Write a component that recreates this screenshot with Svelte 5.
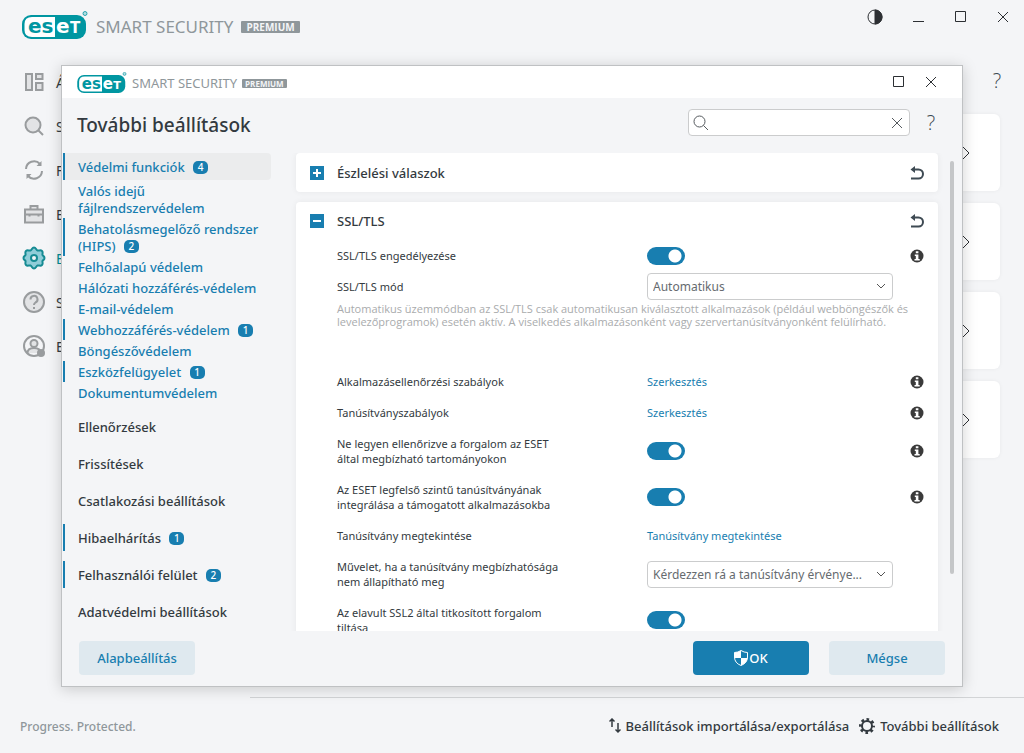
<script>
    let navItems = [
        { letter: 'Á', icon: 'overview' },
        { letter: 'S', icon: 'scan' },
        { letter: 'F', icon: 'update' },
        { letter: 'E', icon: 'tools' },
        { letter: 'B', icon: 'setup', active: true },
        { letter: 'S', icon: 'help' },
        { letter: 'E', icon: 'account' }
    ]

    let protections = [
        { label: 'Valós idejű fájlrendszervédelem' },
        { label: 'Behatolásmegelőző rendszer (HIPS)', count: 2 },
        { label: 'Felhőalapú védelem' },
        { label: 'Hálózati hozzáférés-védelem' },
        { label: 'E-mail-védelem' },
        { label: 'Webhozzáférés-védelem', count: 1 },
        { label: 'Böngészővédelem' },
        { label: 'Eszközfelügyelet', count: 1 },
        { label: 'Dokumentumvédelem' }
    ]

    let sections = [
        { label: 'Ellenőrzések' },
        { label: 'Frissítések' },
        { label: 'Csatlakozási beállítások' },
        { label: 'Hibaelhárítás', count: 1 },
        { label: 'Felhasználói felület', count: 2 },
        { label: 'Adatvédelmi beállítások' }
    ]

    let settings = $state([
        { id: 'enable', label: 'SSL/TLS engedélyezése', type: 'toggle', on: true, info: true },
        {
            id: 'mode', label: 'SSL/TLS mód', type: 'select', value: 'Automatikus',
            note: 'Automatikus üzemmódban az SSL/TLS csak automatikusan kiválasztott alkalmazások (például webböngészők és levelezőprogramok) esetén aktív. A viselkedés alkalmazásonként vagy szervertanúsítványonként felülírható.'
        },
        { id: 'app-rules', label: 'Alkalmazásellenőrzési szabályok', type: 'link', value: 'Szerkesztés', info: true },
        { id: 'cert-rules', label: 'Tanúsítványszabályok', type: 'link', value: 'Szerkesztés', info: true },
        { id: 'trusted', label: 'Ne legyen ellenőrizve a forgalom az ESET által megbízható tartományokon', type: 'toggle', on: true, info: true },
        { id: 'root', label: 'Az ESET legfelső szintű tanúsítványának integrálása a támogatott alkalmazásokba', type: 'toggle', on: true, info: true },
        { id: 'view', label: 'Tanúsítvány megtekintése', type: 'link', value: 'Tanúsítvány megtekintése' },
        { id: 'action', label: 'Művelet, ha a tanúsítvány megbízhatósága nem állapítható meg', type: 'select', value: 'Kérdezzen rá a tanúsítvány érvénye...' },
        { id: 'ssl2', label: 'Az elavult SSL2 által titkosított forgalom tiltása', type: 'toggle', on: true }
    ])

    let search = $state('')
</script>

{#snippet brand(small)}
    <div class="brand" class:small>
        <svg class="pill" viewBox="0 0 66 28">
            <rect x="0" y="4" width="64" height="24" rx="9" fill="#0096a1" />
            <path d="M10 6h23v20H10q-7.500 0-7.500-7v-6q0-7 7.500-7z" fill="#fff" />
            <text x="6" y="22" font-size="20" fill="#0096a1">es</text>
            <text x="34" y="22" font-size="20" fill="#fff">e</text>
            <text x="48" y="22" font-size="15" fill="#fff">T</text>
            <circle cx="63" cy="2.500" r="2" fill="#b5dde1" stroke="#0096a1" stroke-width=".8" />
        </svg>
        <span class="product">SMART SECURITY</span>
        <span class="edition">PREMIUM</span>
    </div>
{/snippet}

{#snippet count(n)}
    {#if n}<span class="count">{n}</span>{/if}
{/snippet}

{#snippet cross()}
    <svg width="12" height="12" viewBox="0 0 12 12"><path d="M1 1l10 10M11 1L1 11" /></svg>
{/snippet}

{#snippet undo()}
    <button class="undo" aria-label="↶">
        <svg width="14" height="16" viewBox="0 0 14 16">
            <path d="M3 4.500h5.500a4.500 4.500 0 0 1 0 9H1" fill="none" stroke="#3e4a53" stroke-width="2" />
            <path d="M0.500 4.500L5 1v7z" fill="#3e4a53" />
        </svg>
    </button>
{/snippet}

<div class="app">
    <header class="top">
        {@render brand(false)}
        <div class="window-buttons">
            <button aria-label="◐">
                <svg width="16" height="16" viewBox="0 0 16 16"><circle cx="8" cy="8" r="7" /><path d="M8 1a7 7 0 0 1 0 14z" fill="#2c2f33" /></svg>
            </button>
            <button aria-label="_"><svg width="12" height="12" viewBox="0 0 12 12"><path d="M0 10.500h11" /></svg></button>
            <button aria-label="□"><svg width="12" height="12" viewBox="0 0 12 12"><path d="M.500.500h10v10H.500z" /></svg></button>
            <button aria-label="×">{@render cross()}</button>
        </div>
    </header>

    <div class="middle">
        <nav class="rail">
            {#each navItems as item}
                <a href="#top" class:active={item.active}>
                    <svg width="24" height="24" viewBox="0 0 24 24">
                        {#if item.icon === 'overview'}
                            <path d="M4 4h6v16H4zM14 4h6.500v5H14zM14 13h6.500v7H14z" />
                        {:else if item.icon === 'scan'}
                            <circle cx="11" cy="11" r="7.500" /><path d="M16.500 16.500l4.500 4.500" />
                        {:else if item.icon === 'update'}
                            <path fill="none" d="M4 11a8 8 0 0 1 14-5M20 13a8 8 0 0 1-14 5" />
                            <path d="M19.500 3v5h-5zM4.500 21v-5h5z" class="solid" />
                        {:else if item.icon === 'tools'}
                            <path d="M3 7.500h18v13H3zM8.500 7V4h7v3" /><path fill="none" d="M3 12.500h18M7.500 12v2.500M16.500 12v2.500" />
                        {:else if item.icon === 'setup'}
                            <path d="M12 1.500c2 0 2 2.500 3.500 3s3-1 4.500.500 0 3 .500 4 2 1 2 3-1.500 2-2 3 1 2.500-.500 4-3 0-4.500.500-1.500 3-3.500 3-2-2.500-3.500-3-3 1-4.500-.500 0-3-.500-4-2-1-2-3 1.500-2 2-3-1-2.500.500-4 3 0 4.500-.500 1.500-3 3.500-3z" />
                            <circle cx="12" cy="12" r="3" fill="#f4f5f7" />
                        {:else if item.icon === 'help'}
                            <circle cx="12" cy="12" r="10" /><path fill="none" d="M8.500 9.500a3.500 3.500 0 1 1 5 3q-1.500 1-1.500 2.500M12 17v2" />
                        {:else}
                            <circle cx="12" cy="12" r="10" fill="#f4f5f7" /><path d="M5.500 19q0-5 6.500-5t6.500 5" />
                            <circle cx="12" cy="9.500" r="3.500" /><circle cx="19" cy="19" r="4" class="solid" />
                        {/if}
                    </svg>
                    <span>{item.letter}</span>
                </a>
            {/each}
        </nav>
        <main class="tiles">
            <button class="ask">?</button>
            {#each [1, 2, 3, 4] as tile (tile)}
                <button class="tile" aria-label=">">
                    <svg width="10" height="16" viewBox="0 0 10 16"><path d="M2 1l7 7-7 7" /></svg>
                </button>
            {/each}
        </main>
    </div>

    <footer class="bottom">
        <span class="motto">Progress. Protected.</span>
        <div class="bottom-links">
            <a href="#import">
                <svg width="12" height="16" viewBox="0 0 12 16">
                    <path d="M3 9V1M.500 3.500L3 1l2.500 2.500M9 5v9M6.500 11.500L9 14l2.500-2.500" fill="none" stroke="#333a40" stroke-width="1.500" />
                </svg>
                Beállítások importálása/exportálása
            </a>
            <a href="#advanced">
                <svg width="16" height="16" viewBox="0 0 16 16" fill="none" stroke="#333a40">
                    <circle cx="8" cy="8" r="5" stroke-width="2" />
                    <circle cx="8" cy="8" r="6.500" stroke-width="3" stroke-dasharray="2.553 2.553" stroke-dashoffset="1.276" />
                </svg>
                További beállítások
            </a>
        </div>
    </footer>

    <section class="dialog">
        <div class="titlebar">
            {@render brand(true)}
            <div class="window-buttons">
                <button aria-label="□"><svg width="12" height="12" viewBox="0 0 12 12"><path d="M.500.500h10v10H.500z" /></svg></button>
                <button aria-label="×">{@render cross()}</button>
            </div>
        </div>

        <div class="heading">
            <h1>További beállítások</h1>
            <label class="search">
                <svg width="16" height="16" viewBox="0 0 16 16"><circle cx="6.500" cy="6.500" r="5.500" /><path d="M10.500 10.500l4.500 4.500" /></svg>
                <input type="text" bind:value={search} />
                <button aria-label="×" onclick={() => (search = '')}>{@render cross()}</button>
            </label>
            <button class="ask">?</button>
        </div>

        <div class="body">
            <nav class="menu">
                <a class="section selected marked" href="#protections">Védelmi funkciók {@render count(4)}</a>
                {#each protections as item}
                    <a class="sub" class:marked={item.count} href="#protections">{item.label} {@render count(item.count)}</a>
                {/each}
                {#each sections as item}
                    <a class="section" class:marked={item.count} href="#section">{item.label} {@render count(item.count)}</a>
                {/each}
            </nav>

            <div class="panels">
                <div class="card">
                    <div class="card-head">
                        <button class="fold" aria-label="+"><svg width="14" height="14" viewBox="0 0 14 14"><path d="M3 7h8M7 3v8" /></svg></button>
                        <h2>Észlelési válaszok</h2>
                        {@render undo()}
                    </div>
                </div>
                <div class="card">
                    <div class="card-head open">
                        <button class="fold" aria-label="-"><svg width="14" height="14" viewBox="0 0 14 14"><path d="M3 7h8" /></svg></button>
                        <h2>SSL/TLS</h2>
                        {@render undo()}
                    </div>
                    {#each settings as row (row.id)}
                        <div class="row">
                            <label for={row.id}>{row.label}</label>
                            {#if row.type === 'toggle'}
                                <input id={row.id} class="toggle" type="checkbox" bind:checked={row.on} />
                            {:else if row.type === 'select'}
                                <div class="select">
                                    <select id={row.id}><option>{row.value}</option></select>
                                    <svg width="10" height="6" viewBox="0 0 10 6"><path d="M1 1l4 4 4-4" /></svg>
                                </div>
                            {:else}
                                <a id={row.id} href="#edit">{row.value}</a>
                            {/if}
                            {#if row.info}
                                <button class="info" aria-label="i">
                                    <svg width="14" height="14" viewBox="0 0 14 14">
                                        <circle cx="7" cy="7" r="6.500" fill="#3a3a3a" />
                                        <path d="M5.800 2.300h2.600v2H5.800zM4.800 5.500h3.600v4.500H9.700v1.500H4.500V10h1.300V7h-1z" fill="#fff" />
                                    </svg>
                                </button>
                            {/if}
                        </div>
                        {#if row.note}
                            <p class="note">{row.note}</p>
                        {/if}
                    {/each}
                </div>
            </div>
            <div class="scroll"><div class="thumb"></div></div>
        </div>

        <div class="actions">
            <button class="light">Alapbeállítás</button>
            <button class="primary">
                <svg width="14" height="16" viewBox="0 0 14 16">
                    <path d="M7 .500Q10 2.500 13.500 2.500V7q0 6-6.500 8.500Q.500 13 .500 7V2.500Q4 2.500 7 .500z" fill="#187eb0" stroke="#fff" />
                    <path d="M7 .500V8H.500V2.500Q4 2.500 7 .500zM7 8h6.500q-.500 5-6.500 7.500z" fill="#fff" />
                </svg>OK
            </button>
            <button class="light">Mégse</button>
        </div>
    </section>
</div>

<style>
    :global(body){
        margin: 0;
        background: #f4f5f7;
    }
    .app{
        position: relative;
        display: flex;
        flex-direction: column;
        min-height: 100vh;
        overflow: hidden;
        font-family: "Noto Sans", "Open Sans", sans-serif;
        font-size: 13px;
        color: #333a40;
    }
    button{
        padding: 0;
        border: 0;
        background: none;
        font: inherit;
        color: inherit;
        cursor: pointer;
    }
    a{
        color: inherit;
        text-decoration: none;
    }
    svg{
        display: block;
        flex: none;
    }

    /* logo */
    .brand{
        display: flex;
        align-items: center;
        gap: 8px;
        color: #8f979b;
    }
    .pill{
        width: 66px;
        height: 28px;
        font-family: "DejaVu Sans", sans-serif;
        font-weight: 700;
    }
    .product{
        font-size: 17px;
        line-height: 24px;
        padding-top: 4px;
    }
    .edition{
        margin-top: 4px;
        padding: 0 5px;
        border-radius: 1px;
        background: #8f979b;
        color: #f4f5f7;
        font-family: "Open Sans", sans-serif;
        font-size: 10px;
        font-weight: 700;
        line-height: 12px;
    }
    .small{
        gap: 5px;
    }
    .small .pill{
        width: 50px;
        height: 21px;
    }
    .small .product{
        font-size: 13px;
        line-height: 18px;
        padding-top: 2px;
    }
    .small .edition{
        margin-top: 2px;
        padding: 0 3px;
        font-size: 8px;
        line-height: 9px;
    }

    /* main window */
    .top{
        display: flex;
        justify-content: space-between;
        align-items: flex-start;
        height: 60px;
        padding: 11px 15px 0 22px;
        box-sizing: border-box;
    }
    .window-buttons{
        display: flex;
        align-items: center;
        gap: 30px;
    }
    .top .window-buttons{
        margin-top: -2px;
    }
    .window-buttons svg,
    .search svg,
    .tile svg{
        fill: none;
        stroke: #2c2f33;
    }
    .middle{
        display: flex;
        flex: 1;
    }
    .rail{
        width: 250px;
    }
    .rail a{
        display: flex;
        align-items: center;
        gap: 10px;
        height: 44px;
        padding-left: 22px;
        font-size: 14px;
    }
    .rail svg{
        fill: #e2e3e5;
        stroke: #999c9e;
        stroke-width: 2;
    }
    .rail .solid{
        fill: #999c9e;
        stroke: none;
    }
    .rail .active{
        color: #008b94;
    }
    .rail .active svg{
        fill: #8fcdd8;
        stroke: #168b93;
    }
    .tiles{
        display: flex;
        flex: 1;
        flex-direction: column;
        gap: 12px;
        padding-right: 24px;
    }
    .ask{
        width: 22px;
        color: #3e4a53;
        font-family: "Open Sans", sans-serif;
        font-size: 20px;
        font-weight: 300;
        line-height: 28px;
    }
    .tiles .ask{
        height: 42px;
        align-self: flex-end;
        margin-right: -8px;
    }
    .tile{
        display: flex;
        align-items: center;
        justify-content: flex-end;
        height: 77px;
        padding-right: 30px;
        border-radius: 6px;
        background: #fff;
        box-shadow: 0 0 4px rgba(0,0,0,.05);
    }
    .bottom{
        display: flex;
        align-items: center;
        justify-content: space-between;
        height: 56px;
        padding: 0 25px 0 20px;
        background: linear-gradient(#d2d4d6, #d2d4d6) no-repeat 250px 0 / 100% 1px;
    }
    .motto{
        padding-top: 2px;
        color: #8f979b;
        font-size: 12px;
        font-weight: 500;
    }
    .bottom-links{
        display: flex;
        gap: 10px;
        padding-top: 2px;
        font-weight: 500;
    }
    .bottom-links a{
        display: flex;
        align-items: center;
        gap: 5px;
    }

    /* settings dialog */
    .dialog{
        position: absolute;
        inset: 65px 61px 66px;
        display: flex;
        flex-direction: column;
        border: 1px solid #bfc1c3;
        background: #f4f5f7;
        box-shadow: 0 2px 14px rgba(0,0,0,.18);
    }
    .titlebar{
        display: flex;
        justify-content: space-between;
        height: 32px;
        padding: 0 25px 0 15px;
        background: #fff;
    }
    .titlebar .window-buttons{
        gap: 20px;
    }
    .heading{
        display: flex;
        align-items: flex-start;
        height: 44px;
        padding: 11px 20px 0 15px;
    }
    h1{
        flex: 1;
        margin: 0;
        font-size: 19px;
        font-weight: 500;
        line-height: 32px;
    }
    .search{
        display: flex;
        align-items: center;
        gap: 5px;
        width: 222px;
        height: 27px;
        margin-right: 10px;
        padding: 0 6px 0 4px;
        box-sizing: border-box;
        border: 1px solid #cbcccd;
        border-radius: 4px;
        background: #fff;
    }
    .search svg{
        stroke: #555a5e;
    }
    .search input{
        flex: 1;
        min-width: 0;
        border: 0;
        outline: 0;
        background: none;
        font: inherit;
    }
    .body{
        display: flex;
        flex: 1;
        min-height: 0;
    }
    .menu{
        width: 208px;
        padding-left: 1px;
        font-weight: 500;
    }
    .menu a{
        display: block;
        padding-left: 13px;
        border-left: 2px solid transparent;
    }
    .menu .marked{
        border-color: #187eb0;
    }
    .section{
        margin-top: 10px;
        padding-top: 2px;
        line-height: 25px;
    }
    .menu .selected{
        margin-top: 0;
        border-radius: 0 4px 4px 0;
        background: #ebeced;
        color: #187eb0;
    }
    .sub{
        padding: 3px 10px 1px 0;
        line-height: 17px;
        color: #187eb0;
    }
    .count{
        display: inline-block;
        width: 15px;
        margin-left: 5px;
        border-radius: 5px;
        background: #187eb0;
        color: #fff;
        font-size: 10px;
        line-height: 13px;
        text-align: center;
        vertical-align: 1px;
    }
    .panels{
        display: flex;
        flex: 1;
        flex-direction: column;
        gap: 10px;
        overflow: hidden;
        padding: 0 12px 0 25px;
    }
    .card{
        flex: none;
        border-radius: 4px;
        background: #fff;
        box-shadow: 0 0 6px rgba(0,0,0,.06);
    }
    .card-head{
        display: flex;
        align-items: center;
        height: 39px;
        padding: 0 14px;
    }
    .card-head.open{
        height: 38px;
    }
    .fold svg{
        background: #187eb0;
        stroke: #fff;
        stroke-width: 2;
    }
    h2{
        flex: 1;
        margin: 0;
        padding-left: 13px;
        font-size: 13px;
        font-weight: 500;
    }
    .row{
        display: grid;
        grid-template-columns: 310px 1fr 14px;
        align-items: center;
        min-height: 31px;
        padding: 0 14px 0 41px;
        font-size: 11px;
        line-height: 15px;
    }
    .row label{
        max-width: 235px;
        padding: 8px 0;
    }
    .row a{
        color: #187eb0;
    }
    .toggle{
        appearance: none;
        width: 38px;
        height: 18px;
        margin: 0;
        border-radius: 9px;
        background: radial-gradient(circle at 28px 9px, #fff 6px, #187eb0 7px);
    }
    .toggle:not(:checked){
        background: radial-gradient(circle at 10px 9px, #fff 6px, #999c9e 7px);
    }
    .select{
        position: relative;
        width: 246px;
    }
    .select select{
        display: block;
        width: 100%;
        height: 27px;
        padding: 0 20px 0 5px;
        appearance: none;
        border: 1px solid #cbcccd;
        border-radius: 4px;
        background: #fff;
        color: #666b6f;
        font: inherit;
        font-size: 12px;
    }
    .select svg{
        position: absolute;
        top: 10px;
        right: 7px;
        fill: none;
        stroke: #555;
        pointer-events: none;
    }
    .note{
        margin: 0;
        padding: 0 20px 38px 41px;
        color: #a9abad;
        font-family: "Open Sans", sans-serif;
        font-size: 11px;
        line-height: 13px;
    }
    .scroll{
        width: 12px;
        padding: 8px 0 57px;
    }
    .thumb{
        width: 4px;
        height: 100%;
        border-radius: 2px;
        background: #c4c6c8;
    }
    .actions{
        display: flex;
        gap: 20px;
        padding: 10px 17px 11px;
    }
    .actions button{
        display: flex;
        align-items: center;
        justify-content: center;
        gap: 1px;
        width: 116px;
        height: 34px;
        border-radius: 4px;
        font-weight: 500;
    }
    .actions .light{
        background: #dfe9ef;
        color: #187eb0;
    }
    .actions .light:first-child{
        margin-right: auto;
    }
    .actions .primary{
        background: #187eb0;
        color: #fff;
    }
</style>
